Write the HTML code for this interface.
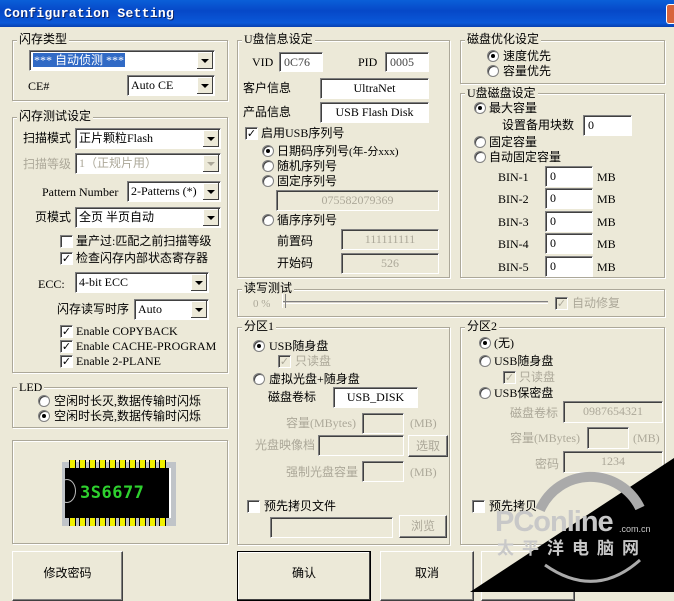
<!DOCTYPE html><html><head><meta charset="utf-8"><style>
*{box-sizing:border-box;margin:0;padding:0}
body{width:674px;height:592px;overflow:hidden;background:#ece9d8;position:relative;font:12px "Liberation Serif","Noto Sans CJK SC",serif;color:#000}
.a{position:absolute;white-space:nowrap;line-height:14px}
.g{position:absolute;border:1px solid #aca899;box-shadow:inset 1px 1px 0 #fff,1px 1px 0 #fff}
.gl{position:absolute;background:#ece9d8;padding:0 2px;line-height:14px;white-space:nowrap}
.in{position:absolute;background:#fff;border-top:1px solid #808080;border-left:1px solid #808080;border-bottom:1px solid #fff;border-right:1px solid #fff;box-shadow:inset 1px 1px 0 #404040;line-height:18px;padding-left:4px;white-space:nowrap;overflow:hidden}
.dis{background:#ece9d8;color:#aca899}
.c{text-align:center;padding:0}
.cb{position:absolute;background:#fff;border-top:1px solid #808080;border-left:1px solid #808080;border-bottom:1px solid #fff;border-right:1px solid #fff;box-shadow:inset 1px 1px 0 #404040;line-height:18px;padding-left:3px;white-space:nowrap}
.cb:after{content:"";position:absolute;right:1px;top:1px;bottom:1px;width:16px;background:#ece9d8;box-shadow:inset -1px -1px 0 #404040,inset 1px 1px 0 #fff}
.cb:before{content:"";position:absolute;right:5px;top:8px;border:4px solid transparent;border-top:4px solid #000;z-index:2}
.cb.dis:before{border-top-color:#aca899}
.rd{position:absolute;width:12px;height:12px;border-radius:50%;background:#fff;border:1px solid #808080;box-shadow:inset 1px 1px 0 #404040}
.rd.on:after{content:"";position:absolute;left:3px;top:3px;width:4px;height:4px;border-radius:50%;background:#000}
.ck{position:absolute;width:13px;height:13px;background:#fff;border-top:1px solid #808080;border-left:1px solid #808080;border-bottom:1px solid #fff;border-right:1px solid #fff;box-shadow:inset 1px 1px 0 #404040;font-size:11px;line-height:11px;text-align:center;font-family:"DejaVu Sans",sans-serif;font-weight:bold}
.btn{position:absolute;background:#ece9d8;border:1px solid #fff;border-right-color:#404040;border-bottom-color:#404040;box-shadow:inset -1px -1px 0 #808080;text-align:center;font-size:12px}
.gr{color:#aca899}
</style></head><body>
<div style="position:absolute;left:0;top:0;width:674px;height:27px;background:linear-gradient(#0a5fd8,#0648c8 40%,#0a58d8 85%,#0840b0)"></div>
<div class="a" style="left:4px;top:6px;color:#fff;font:bold 13px 'Liberation Mono',monospace;letter-spacing:0.3px;text-shadow:1px 1px 0 #0a246a">Configuration Setting</div>
<div style="position:absolute;left:666px;top:4px;width:10px;height:20px;background:#d8643c;border-radius:3px 0 0 3px;border:1px solid #fff"></div>

<!-- left -->
<div class="g" style="left:12px;top:40px;width:216px;height:61px"></div><div class="gl" style="left:17px;top:32px">闪存类型</div>
<div class="cb" style="left:29px;top:50px;width:186px;height:21px"><span style="background:#316ac5;color:#fff;padding:0 1px">*** 自动侦测 ***</span></div>
<div class="a" style="left:28px;top:79px">CE#</div>
<div class="cb" style="left:127px;top:75px;width:88px;height:21px">Auto CE</div>

<div class="g" style="left:12px;top:117px;width:216px;height:256px"></div><div class="gl" style="left:17px;top:109px">闪存测试设定</div>
<div class="a" style="left:23px;top:131px">扫描模式</div><div class="cb" style="left:75px;top:128px;width:146px;height:21px">正片颗粒Flash</div>
<div class="a gr" style="left:23px;top:157px">扫描等级</div><div class="cb dis" style="left:75px;top:153px;width:146px;height:21px;color:#aca899">1（正规片用）</div>
<div class="a" style="left:42px;top:185px">Pattern Number</div><div class="cb" style="left:127px;top:181px;width:94px;height:21px">2-Patterns (*)</div>
<div class="a" style="left:35px;top:210px">页模式</div><div class="cb" style="left:75px;top:207px;width:146px;height:21px">全页 半页自动</div>
<div class="ck" style="left:60px;top:235px"></div><div class="a" style="left:76px;top:234px">量产过:匹配之前扫描等级</div>
<div class="ck" style="left:60px;top:252px">✓</div><div class="a" style="left:76px;top:251px">检查闪存内部状态寄存器</div>
<div class="a" style="left:38px;top:277px">ECC:</div><div class="cb" style="left:75px;top:272px;width:134px;height:21px">4-bit ECC</div>
<div class="a" style="left:57px;top:302px">闪存读写时序</div><div class="cb" style="left:134px;top:299px;width:75px;height:21px">Auto</div>
<div class="ck" style="left:60px;top:325px">✓</div><div class="a" style="left:76px;top:324px">Enable COPYBACK</div>
<div class="ck" style="left:60px;top:340px">✓</div><div class="a" style="left:76px;top:339px">Enable CACHE-PROGRAM</div>
<div class="ck" style="left:60px;top:355px">✓</div><div class="a" style="left:76px;top:354px">Enable 2-PLANE</div>

<div class="g" style="left:12px;top:387px;width:216px;height:41px"></div><div class="gl" style="left:17px;top:380px">LED</div>
<div class="rd" style="left:38px;top:395px"></div><div class="a" style="left:54px;top:394px">空闲时长灭,数据传输时闪烁</div>
<div class="rd on" style="left:38px;top:410px"></div><div class="a" style="left:54px;top:409px">空闲时长亮,数据传输时闪烁</div>

<div class="g" style="left:12px;top:440px;width:216px;height:104px"></div>
<div style="position:absolute;left:62px;top:462px;width:114px;height:64px;background:#c0c4c8"></div>
<div style="position:absolute;left:65px;top:468px;width:106px;height:50px;background:#000;border-right:2px solid #fff"></div>
<div style="position:absolute;left:58px;top:479px;width:18px;height:24px;border:1px solid #bbb;border-radius:50%;clip-path:inset(0 0 0 7px)"></div>
<div class="a" style="left:80px;top:484px;color:#2ed02e;font:bold 17px 'DejaVu Sans Mono',monospace;line-height:18px;letter-spacing:0.5px">3S6677</div>
<div style="position:absolute;left:69px;top:460px;width:99px;height:8px;background:repeating-linear-gradient(90deg,#000 0,#000 1px,#f0f000 1px,#f0f000 6px,#000 6px,#000 7px,transparent 7px,transparent 10px)"></div>
<div style="position:absolute;left:69px;top:518px;width:99px;height:8px;background:repeating-linear-gradient(90deg,#000 0,#000 1px,#f0f000 1px,#f0f000 6px,#000 6px,#000 7px,transparent 7px,transparent 10px)"></div>

<div class="btn" style="left:12px;top:551px;width:111px;height:50px;line-height:42px">修改密码</div>
<div class="btn" style="left:237px;top:551px;width:134px;height:50px;line-height:42px;border:1px solid #000;box-shadow:inset -1px -1px 0 #404040,inset 1px 1px 0 #fff">确认</div>
<div class="btn" style="left:380px;top:551px;width:94px;height:50px;line-height:42px">取消</div>
<div class="btn" style="left:481px;top:551px;width:94px;height:50px"></div>

<!-- middle -->
<div class="g" style="left:237px;top:40px;width:213px;height:238px"></div><div class="gl" style="left:242px;top:32px">U盘信息设定</div>
<div class="a" style="left:252px;top:55px">VID</div><div class="in" style="left:279px;top:52px;width:44px;height:20px;color:#444">0C76</div>
<div class="a" style="left:358px;top:55px">PID</div><div class="in" style="left:385px;top:52px;width:44px;height:20px;color:#444">0005</div>
<div class="a" style="left:243px;top:81px">客户信息</div><div class="in c" style="left:320px;top:78px;width:109px;height:21px">UltraNet</div>
<div class="a" style="left:243px;top:105px">产品信息</div><div class="in c" style="left:320px;top:102px;width:109px;height:21px">USB Flash Disk</div>
<div class="ck" style="left:245px;top:127px">✓</div><div class="a" style="left:261px;top:126px">启用USB序列号</div>
<div class="rd on" style="left:262px;top:145px"></div><div class="a" style="left:277px;top:144px">日期码序列号<span style="font-size:11px">(年-分xxx)</span></div>
<div class="rd" style="left:262px;top:160px"></div><div class="a" style="left:277px;top:159px">随机序列号</div>
<div class="rd" style="left:262px;top:175px"></div><div class="a" style="left:277px;top:174px">固定序列号</div>
<div class="in c dis" style="left:276px;top:190px;width:163px;height:21px">075582079369</div>
<div class="rd" style="left:262px;top:214px"></div><div class="a" style="left:277px;top:213px">循序序列号</div>
<div class="a" style="left:277px;top:234px">前置码</div><div class="in c dis" style="left:341px;top:229px;width:98px;height:21px">111111111</div>
<div class="a" style="left:277px;top:256px">开始码</div><div class="in c dis" style="left:341px;top:253px;width:98px;height:21px">526</div>

<div class="g" style="left:237px;top:289px;width:428px;height:28px"></div><div class="gl" style="left:242px;top:281px">读写测试</div>
<div class="a gr" style="left:253px;top:297px;font-size:11px">0 %</div>
<div style="position:absolute;left:283px;top:301px;width:265px;height:3px;border-top:1px solid #808080;border-bottom:1px solid #fff;background:#d4d0c8"></div>
<div style="position:absolute;left:282px;top:294px;width:4px;height:14px;border-left:1px solid #fff;border-right:1px solid #808080"></div>
<div class="ck" style="left:555px;top:297px;color:#aca899;background:#ece9d8">✓</div><div class="a gr" style="left:572px;top:296px">自动修复</div>

<div class="g" style="left:237px;top:327px;width:213px;height:218px"></div><div class="gl" style="left:242px;top:319px">分区1</div>
<div class="rd on" style="left:253px;top:340px"></div><div class="a" style="left:269px;top:339px">USB随身盘</div>
<div class="ck" style="left:278px;top:355px;color:#aca899;background:#ece9d8">✓</div><div class="a gr" style="left:295px;top:354px">只读盘</div>
<div class="rd" style="left:253px;top:373px"></div><div class="a" style="left:269px;top:372px">虚拟光盘+随身盘</div>
<div class="a" style="left:268px;top:390px">磁盘卷标</div><div class="in c" style="left:333px;top:387px;width:85px;height:21px">USB_DISK</div>
<div class="a gr" style="left:286px;top:416px">容量(MBytes)</div><div class="in dis" style="left:362px;top:413px;width:42px;height:21px"></div><div class="a gr" style="left:410px;top:416px">(MB)</div>
<div class="a gr" style="left:255px;top:438px">光盘映像档</div><div class="in dis" style="left:318px;top:435px;width:86px;height:21px"></div>
<div class="btn gr" style="left:408px;top:435px;width:40px;height:22px;line-height:20px">选取</div>
<div class="a gr" style="left:286px;top:465px">强制光盘容量</div><div class="in dis" style="left:362px;top:461px;width:42px;height:21px"></div><div class="a gr" style="left:410px;top:465px">(MB)</div>
<div class="ck" style="left:247px;top:500px"></div><div class="a" style="left:264px;top:499px">预先拷贝文件</div>
<div class="in dis" style="left:270px;top:517px;width:123px;height:21px"></div>
<div class="btn gr" style="left:399px;top:515px;width:48px;height:23px;line-height:21px">浏览</div>

<!-- right -->
<div class="g" style="left:460px;top:40px;width:205px;height:44px"></div><div class="gl" style="left:465px;top:32px">磁盘优化设定</div>
<div class="rd on" style="left:487px;top:50px"></div><div class="a" style="left:503px;top:49px">速度优先</div>
<div class="rd" style="left:487px;top:65px"></div><div class="a" style="left:503px;top:64px">容量优先</div>
<div class="g" style="left:460px;top:93px;width:205px;height:185px"></div><div class="gl" style="left:465px;top:86px">U盘磁盘设定</div>
<div class="rd on" style="left:474px;top:102px"></div><div class="a" style="left:489px;top:101px">最大容量</div>
<div class="a" style="left:502px;top:118px">设置备用块数</div><div class="in" style="left:583px;top:115px;width:49px;height:21px">0</div>
<div class="rd" style="left:474px;top:136px"></div><div class="a" style="left:489px;top:135px">固定容量</div>
<div class="rd" style="left:474px;top:151px"></div><div class="a" style="left:489px;top:150px">自动固定容量</div>
<div class="a" style="left:498px;top:170px">BIN-1</div><div class="in" style="left:545px;top:166px;width:48px;height:21px">0</div><div class="a" style="left:597px;top:170px">MB</div>
<div class="a" style="left:498px;top:192px">BIN-2</div><div class="in" style="left:545px;top:188px;width:48px;height:21px">0</div><div class="a" style="left:597px;top:192px">MB</div>
<div class="a" style="left:498px;top:215px">BIN-3</div><div class="in" style="left:545px;top:211px;width:48px;height:21px">0</div><div class="a" style="left:597px;top:215px">MB</div>
<div class="a" style="left:498px;top:237px">BIN-4</div><div class="in" style="left:545px;top:233px;width:48px;height:21px">0</div><div class="a" style="left:597px;top:237px">MB</div>
<div class="a" style="left:498px;top:260px">BIN-5</div><div class="in" style="left:545px;top:256px;width:48px;height:21px">0</div><div class="a" style="left:597px;top:260px">MB</div>

<div class="g" style="left:460px;top:327px;width:205px;height:218px"></div><div class="gl" style="left:465px;top:319px">分区2</div>
<div class="rd on" style="left:479px;top:337px"></div><div class="a" style="left:494px;top:336px">(无)</div>
<div class="rd" style="left:479px;top:355px"></div><div class="a" style="left:494px;top:354px">USB随身盘</div>
<div class="ck" style="left:503px;top:371px;color:#aca899;background:#ece9d8">✓</div><div class="a gr" style="left:519px;top:370px">只读盘</div>
<div class="rd" style="left:479px;top:387px"></div><div class="a" style="left:494px;top:386px">USB保密盘</div>
<div class="a gr" style="left:510px;top:406px">磁盘卷标</div><div class="in c dis" style="left:563px;top:401px;width:100px;height:22px">0987654321</div>
<div class="a gr" style="left:510px;top:431px">容量(MBytes)</div><div class="in dis" style="left:587px;top:427px;width:42px;height:22px"></div><div class="a gr" style="left:633px;top:431px">(MB)</div>
<div class="a gr" style="left:535px;top:457px">密码</div><div class="in c dis" style="left:563px;top:451px;width:100px;height:22px">1234</div>
<div class="ck" style="left:472px;top:500px"></div><div class="a" style="left:489px;top:499px">预先拷贝</div>

<!-- watermark -->
<svg style="position:absolute;left:0;top:0" width="674" height="592">
<polygon points="470,592 674,458 674,592" fill="#000"/>
<path d="M540,510 A55,55 0 0 1 640,508" stroke="#aaa" stroke-width="10" fill="none"/>
<path d="M545,565 Q595,600 640,560" stroke="#aaa" stroke-width="3" fill="none"/>
<text x="495" y="531" font-family="Liberation Sans,sans-serif" font-weight="bold" font-size="29" fill="#c8c8c8" letter-spacing="-1">PConline</text>
<text x="619" y="532" font-family="Liberation Sans,sans-serif" font-size="9" fill="#c8c8c8">.com.cn</text>
<text x="497" y="554" font-family="Noto Sans CJK SC,sans-serif" font-weight="bold" font-size="17" fill="#c8c8c8" letter-spacing="8">太平洋电脑网</text>
</svg>
</body></html>
